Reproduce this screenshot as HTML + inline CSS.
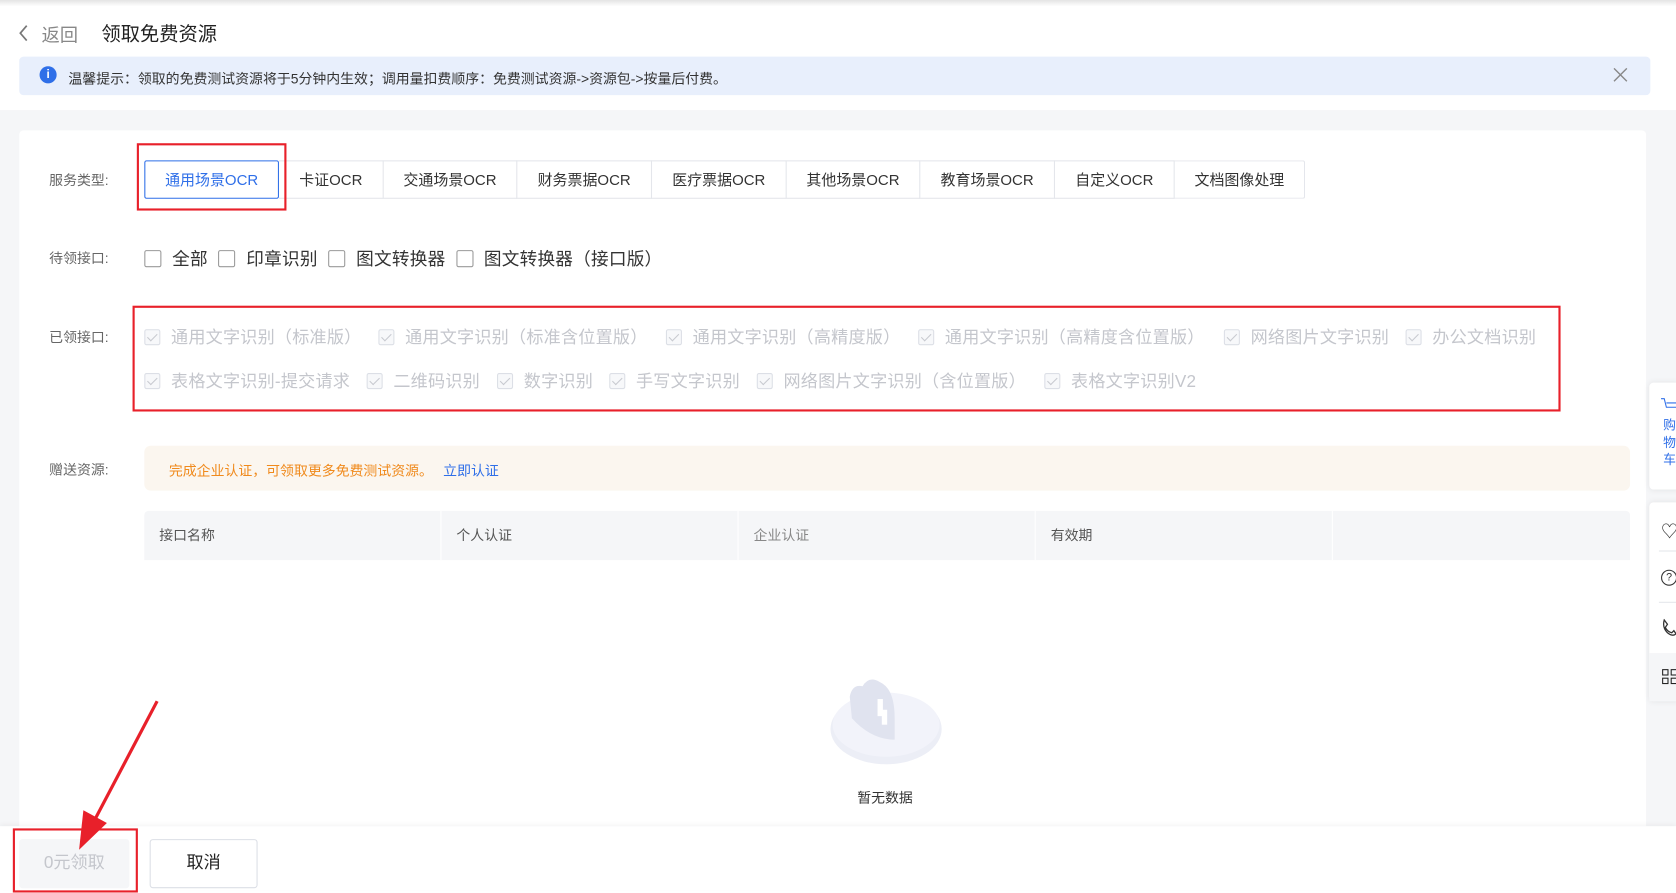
<!DOCTYPE html>
<html><head><meta charset="utf-8"><style>
*{margin:0;padding:0;box-sizing:border-box}
html,body{width:1676px;height:890px;overflow:hidden;background:#fff}
#w{position:absolute;left:0;top:0;width:1568px;height:833px;transform:scale(1.06888);transform-origin:0 0;font-family:"Liberation Sans","Noto Sans CJK SC",sans-serif;color:#333}
.a{position:absolute}
.lab{position:absolute;left:46px;font-size:13px;color:#666}
.tab{position:absolute;top:150px;height:36px;border:1px solid #e4e6eb;border-left:none;font-size:14px;color:#333;display:flex;align-items:center;justify-content:center}
.cb{display:inline-block;width:16px;height:16px;border:1px solid #999;border-radius:2px;vertical-align:-2px;margin-right:10px}
.row{position:absolute;font-size:16.5px;color:#333;white-space:nowrap;letter-spacing:.2px}
.row span{margin-right:10px}
.dis{position:absolute;font-size:16px;color:#c4c6cc;white-space:nowrap;letter-spacing:.2px}
.ck{display:inline-block;width:15px;height:15px;border:1px solid #dcdfe6;border-radius:2px;background:#f7f8fa;vertical-align:-2px;margin-right:10px;position:relative}
.ck:after{content:"";position:absolute;left:4px;top:1px;width:4px;height:8px;border:solid #c8cad0;border-width:0 1.5px 1.5px 0;transform:rotate(45deg)}
.th{position:absolute;top:478px;height:46px;font-size:13px;color:#555;line-height:46px;padding-left:14px;border-right:1px solid #fff}
</style></head><body><div id="w">
<div class="a" style="left:0;top:0;width:1568px;height:6px;background:linear-gradient(#e4e4e4,#fff)"></div>
<svg class="a" style="left:17px;top:23px" width="10" height="16"><path d="M8 1 L2 8 L8 15" stroke="#777" stroke-width="1.6" fill="none"/></svg>
<div class="a" style="left:39px;top:19px;font-size:17px;color:#888">返回</div>
<div class="a" style="left:95px;top:18px;font-size:18px;color:#222">领取免费资源</div>
<div class="a" style="left:18px;top:53px;width:1526px;height:36px;background:#e8effc;border-radius:4px"></div>
<div class="a" style="left:37px;top:62px;width:16px;height:16px;border-radius:50%;background:#2f6fe8;color:#fff;font-size:11px;font-weight:bold;text-align:center;line-height:16px">i</div>
<div class="a" style="left:64px;top:63px;font-size:13px;color:#333">温馨提示：领取的免费测试资源将于5分钟内生效；调用量扣费顺序：免费测试资源-&gt;资源包-&gt;按量后付费。</div>
<svg class="a" style="left:1509px;top:63px" width="14" height="14"><path d="M1 1L13 13M13 1L1 13" stroke="#888" stroke-width="1.3"/></svg>
<div class="a" style="left:0;top:103px;width:1568px;height:670px;background:#f5f6f8"></div>
<div class="a" style="left:18px;top:122px;width:1522px;height:651px;background:#fff;border-radius:4px 4px 0 0"></div>
<div class="lab" style="top:158px">服务类型:</div>
<div class="tab" style="left:135px;width:126px;border:1px solid #2f6fe8;color:#2f6fe8;border-radius:2px">通用场景OCR</div>
<div class="tab" style="left:261px;width:98px">卡证OCR</div>
<div class="tab" style="left:359px;width:125px">交通场景OCR</div>
<div class="tab" style="left:484px;width:126px">财务票据OCR</div>
<div class="tab" style="left:610px;width:126px">医疗票据OCR</div>
<div class="tab" style="left:736px;width:125px">其他场景OCR</div>
<div class="tab" style="left:861px;width:126px">教育场景OCR</div>
<div class="tab" style="left:987px;width:112px">自定义OCR</div>
<div class="tab" style="left:1099px;width:122px;border-radius:0 2px 2px 0">文档图像处理</div>
<div class="a" style="left:128px;top:134px;width:140px;height:63px;border:2px solid #e8202a"></div>
<div class="lab" style="top:231px">待领接口:</div>
<div class="row" style="left:135px;top:229px"><i class="cb"></i><span>全部</span><i class="cb"></i><span>印章识别</span><i class="cb"></i><span>图文转换器</span><i class="cb"></i>图文转换器（接口版）</div>
<div class="lab" style="top:305px">已领接口:</div>
<div class="dis" style="left:135px;top:302px"><i class="ck"></i>通用文字识别（标准版）</div>
<div class="dis" style="left:354px;top:302px"><i class="ck"></i>通用文字识别（标准含位置版）</div>
<div class="dis" style="left:623px;top:302px"><i class="ck"></i>通用文字识别（高精度版）</div>
<div class="dis" style="left:859px;top:302px"><i class="ck"></i>通用文字识别（高精度含位置版）</div>
<div class="dis" style="left:1145px;top:302px"><i class="ck"></i>网络图片文字识别</div>
<div class="dis" style="left:1315px;top:302px"><i class="ck"></i>办公文档识别</div>
<div class="dis" style="left:135px;top:343px"><i class="ck"></i>表格文字识别-提交请求</div>
<div class="dis" style="left:343px;top:343px"><i class="ck"></i>二维码识别</div>
<div class="dis" style="left:465px;top:343px"><i class="ck"></i>数字识别</div>
<div class="dis" style="left:570px;top:343px"><i class="ck"></i>手写文字识别</div>
<div class="dis" style="left:708px;top:343px"><i class="ck"></i>网络图片文字识别（含位置版）</div>
<div class="dis" style="left:977px;top:343px"><i class="ck"></i>表格文字识别V2</div>
<div class="a" style="left:124px;top:286px;width:1336px;height:99px;border:2px solid #e8202a"></div>
<div class="lab" style="top:429px">赠送资源:</div>
<div class="a" style="left:135px;top:417px;width:1390px;height:42px;background:#fbf6ef;border-radius:6px"></div>
<div class="a" style="left:158px;top:430px;font-size:13px;color:#f08a1c">完成企业认证，可领取更多免费测试资源。 <span style="color:#2f6fe8;margin-left:6px">立即认证</span></div>
<div class="a" style="left:135px;top:478px;width:1390px;height:46px;background:#f5f6f8;border-radius:4px 4px 0 0"></div>
<div class="th" style="left:135px;width:278px">接口名称</div>
<div class="th" style="left:413px;width:278px">个人认证</div>
<div class="th" style="left:691px;width:278px;color:#888">企业认证</div>
<div class="th" style="left:969px;width:278px">有效期</div>
<svg class="a" style="left:775px;top:632px" width="110" height="88">
<ellipse cx="54" cy="50" rx="52" ry="33" fill="#eceef6"/>
<ellipse cx="54" cy="46" rx="50" ry="30" fill="#f2f3fa"/>
<path d="M20 20 Q22 8 32 10 Q38 0 48 6 Q62 12 62 40 L62 60 Q40 60 22 40 Z" fill="#e0e3ef"/>
<rect x="46" y="22" width="5" height="16" fill="#fff"/><rect x="50" y="32" width="5" height="14" fill="#fff"/>
</svg>
<div class="a" style="left:802px;top:736px;font-size:13px;color:#333">暂无数据</div>
<div class="a" style="left:0;top:773px;width:1568px;height:60px;background:#fff;box-shadow:0 -2px 4px rgba(0,0,0,.04)"></div>
<div class="a" style="left:18px;top:785px;width:103px;height:46px;background:#f5f6f8;border-radius:3px;font-size:16px;color:#c4c6cc;text-align:center;line-height:46px">0元领取</div>
<div class="a" style="left:140px;top:785px;width:101px;height:46px;border:1px solid #dcdfe6;border-radius:3px;font-size:16px;color:#222;text-align:center;line-height:44px">取消</div>
<div class="a" style="left:12px;top:775px;width:117px;height:60px;border:2px solid #e8202a"></div>
<svg class="a" style="left:60px;top:650px;overflow:visible" width="100" height="150"><path d="M87 6 L26 122" stroke="#e8202a" stroke-width="3"/><path d="M14 145 L18 108 L40 120 Z" fill="#e8202a"/></svg>
<div class="a" style="left:1543px;top:358px;width:30px;height:100px;background:#fff;border-radius:4px;box-shadow:0 0 6px rgba(0,0,0,.08)"></div>
<div class="a" style="left:1556px;top:390px;font-size:12px;color:#2f6fe8;line-height:16px;width:12px">购物车</div>
<svg class="a" style="left:1554px;top:371px" width="14" height="14"><path d="M0 2H3L5 10H14M5 6H14" stroke="#2f6fe8" fill="none"/></svg>
<div class="a" style="left:1543px;top:470px;width:30px;height:186px;background:#fff;border-radius:4px;box-shadow:0 0 6px rgba(0,0,0,.08)"></div>
<div class="a" style="left:1543px;top:611px;width:30px;height:45px;background:#f5f6f8"></div>
<div class="a" style="left:1552px;top:515px;width:20px;height:1px;background:#e4e6eb"></div>
<div class="a" style="left:1552px;top:563px;width:20px;height:1px;background:#e4e6eb"></div>
<div class="a" style="left:1554px;top:484px;font-size:16px;color:#333">♡</div>
<div class="a" style="left:1554px;top:533px;width:15px;height:15px;border:1.3px solid #333;border-radius:50%;font-size:10px;line-height:13px;text-align:center">?</div>
<svg class="a" style="left:1554px;top:579px" width="14" height="16"><path d="M3 1 L6 5 L4 8 Q6 12 10 13 L12 11 L14 14 Q11 17 6 13 Q1 8 3 1Z" stroke="#333" fill="none" stroke-width="1.2"/></svg>
<div class="a" style="left:1555px;top:626px;width:6px;height:6px;border:1.3px solid #222"></div>
<div class="a" style="left:1555px;top:634px;width:6px;height:6px;border:1.3px solid #222"></div>
<div class="a" style="left:1563px;top:626px;width:6px;height:6px;border:1.3px solid #222"></div>
<div class="a" style="left:1563px;top:634px;width:6px;height:6px;border:1.3px solid #222"></div>
</div></body></html>
